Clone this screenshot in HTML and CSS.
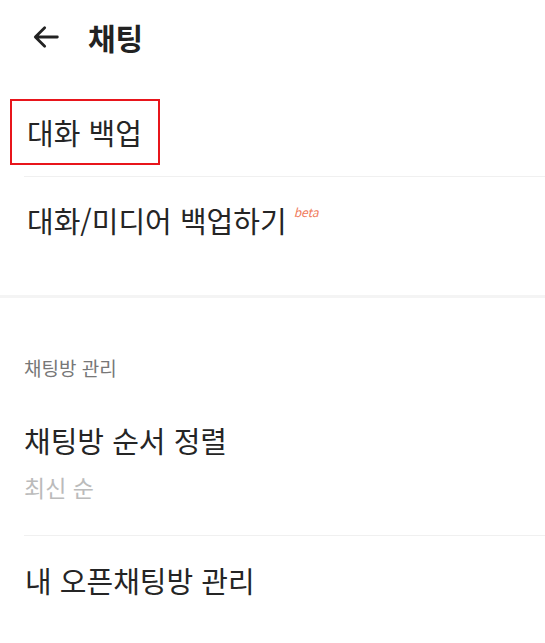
FILE: index.html
```html
<!DOCTYPE html>
<html lang="ko">
<head>
  <meta charset="UTF-8">
  <title>채팅</title>
  <link rel="stylesheet" href="styles.css">
</head>
<body>
  <header class="topbar">
    <svg class="back" width="32" height="32" viewBox="0 0 24 24">
      <path d="M20.5 12H4.5M11 5l-7 7 7 7" fill="none" stroke="#222" stroke-width="2.1" stroke-linecap="round" stroke-linejoin="round"/>
    </svg>
    <h1>채팅</h1>
  </header>

  <div class="group-title">
    <span class="marked">대화 백업</span>
  </div>
  <div class="row first">
    <span class="label">대화/미디어 백업하기<sup class="beta">beta</sup></span>
  </div>

  <div class="section-gap"></div>

  <div class="caption">채팅방 관리</div>
  <div class="row sort">
    <span class="label">채팅방 순서 정렬</span>
    <span class="sub">최신 순</span>
  </div>
  <div class="row last">
    <span class="label">내 오픈채팅방 관리</span>
  </div>
</body>
</html>
```

FILE: styles.css
```css
body {
  margin: 0;
  background: #fff;
  color: #252525;
  font-family: "Noto Sans CJK KR", "Noto Sans", sans-serif;
}
.topbar {
  display: flex;
  align-items: center;
  height: 74px;
  padding-left: 30px;
}
.back {
  display: block;
}
.topbar h1 {
  margin: 0 0 0 26px;
  font-size: 30px;
  font-weight: 700;
  line-height: 40px;
  color: #222;
}
.group-title {
  display: flex;
  padding: 25px 0 11px 10px;
}
.marked {
  border: 2px solid #e8151b;
  padding: 6px 16px 6px 15px;
  font-size: 29px;
  line-height: 50px;
}
.row {
  display: flex;
  flex-direction: column;
  align-items: flex-start;
  margin-left: 24px;
  padding: 23px 0 55px 3px;
  border-top: 1px solid #f0f0f0;
}
.label {
  font-size: 29px;
  line-height: 40px;
}
.beta {
  font-size: 12px;
  font-style: italic;
  color: #f07a5a;
  margin-left: 7px;
  vertical-align: 16px;
  line-height: 0;
}
.section-gap {
  height: 3px;
  background: #f4f4f4;
}
.caption {
  padding: 57px 0 0 24px;
  font-size: 19px;
  line-height: 26px;
  color: #777;
}
.row.sort {
  border-top: none;
  padding: 39px 0 33px 0;
}
.sub {
  font-size: 23px;
  line-height: 30px;
  color: #bbb;
  margin-top: 12px;
}
.row.last {
  padding: 24px 0 0 1px;
}
```
